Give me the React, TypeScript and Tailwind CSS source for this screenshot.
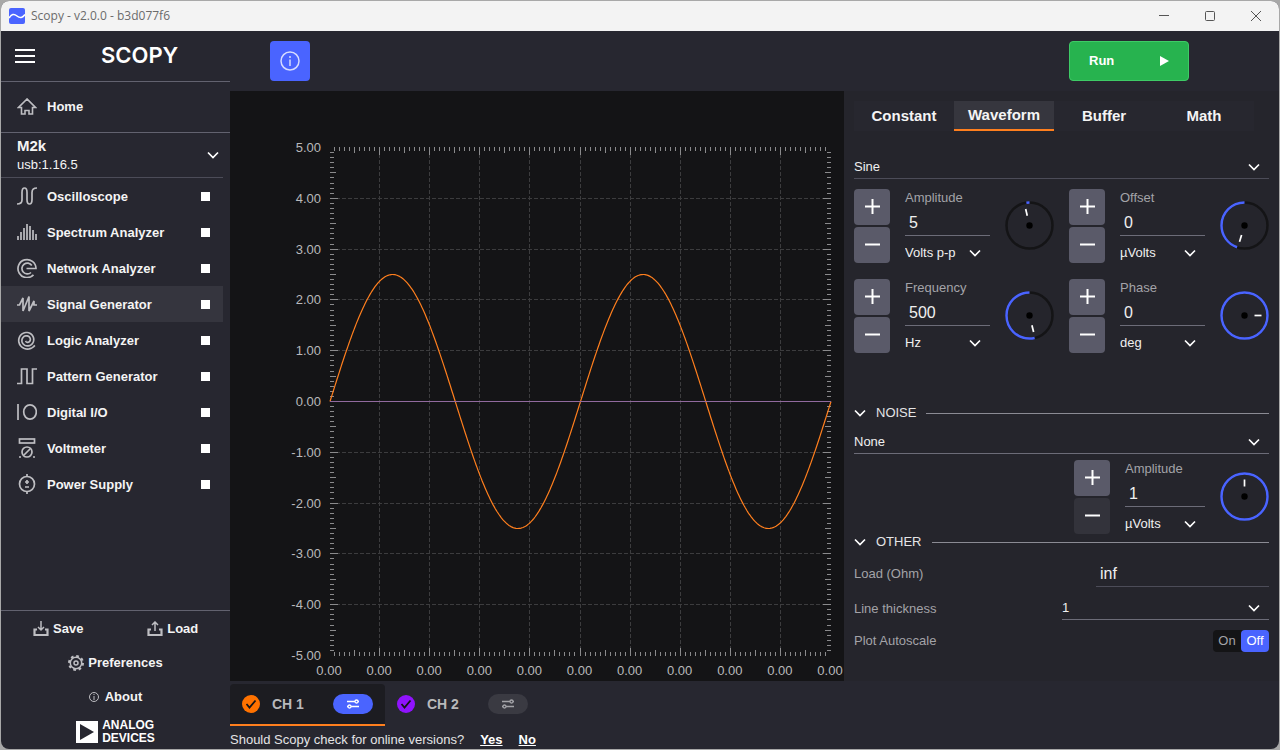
import { useState } from "react";
import type { ReactNode } from "react";
import clsx from "clsx";

type IconName =
  | "oscilloscope"
  | "spectrum"
  | "network"
  | "signal"
  | "logic"
  | "pattern"
  | "digital"
  | "voltmeter"
  | "power";

const TOOLS: { name: string; icon: IconName }[] = [
  { name: "Oscilloscope", icon: "oscilloscope" },
  { name: "Spectrum Analyzer", icon: "spectrum" },
  { name: "Network Analyzer", icon: "network" },
  { name: "Signal Generator", icon: "signal" },
  { name: "Logic Analyzer", icon: "logic" },
  { name: "Pattern Generator", icon: "pattern" },
  { name: "Digital I/O", icon: "digital" },
  { name: "Voltmeter", icon: "voltmeter" },
  { name: "Power Supply", icon: "power" },
];

const TABS = ["Constant", "Waveform", "Buffer", "Math"];

function spiralPath() {
  const points: string[] = [];
  for (let i = 0; i <= 80; i++) {
    const t = i / 80;
    const angle = 0.6 + (1 - t) * 2.3 * 2 * Math.PI;
    const r = 1.5 + 8 * Math.pow(t, 0.85);
    points.push(`${(10 + r * Math.cos(angle)).toFixed(2)} ${(10 + r * Math.sin(angle)).toFixed(2)}`);
  }
  return "M" + points.join("L");
}

const ICONS: Record<IconName, ReactNode> = {
  oscilloscope: (
    <path d="M0 18c3.500 0 5-1 5-4V6.500c0-3 .8-4.500 2.500-4.500S10 3.500 10 6.500v7c0 3 .8 4.500 2.500 4.500s2.500-1.500 2.500-4.500v-7c0-3 1.500-4.500 5-4.500" />
  ),
  spectrum: <path d="M1 18v-4M4 18v-8M7 18V6M10 18V2M13 18V4M16 18V8M19 18v-6" />,
  network: (
    <path d="M9.500 10.500h9.500A9 9 0 1 0 16.500 16.800M14.800 7.500A5.400 5.400 0 1 0 14 14.500" />
  ),
  signal: <path d="M0 11h2.500L6 4v13l6-14.500v14.500l5-10V11H20" />,
  logic: <path d={spiralPath()} />,
  pattern: <path d="M0 17.500h4.500V3h5.500v14.500h5.500V3H20" />,
  digital: (
    <>
      <path d="M1 2v16" />
      <ellipse cx="13" cy="10" rx="6.300" ry="7.200" />
    </>
  ),
  voltmeter: (
    <>
      <rect x="2.500" y="1" width="15" height="4" />
      <circle cx="10" cy="14" r="5" />
      <path d="M7 17l6-6M2 19h2M16 19h2" />
    </>
  ),
  power: (
    <>
      <circle cx="10" cy="10" r="7.500" />
      <path d="M10 0v3M10 17v3M8 8h4M10 6v4M8 13h4" />
    </>
  ),
};

function ToolIcon({ name }: { name: IconName }) {
  return (
    <svg viewBox="0 0 20 20" className="size-5 shrink-0" fill="none" stroke="#bebec2" strokeWidth="1.7" aria-hidden="true">
      {ICONS[name]}
    </svg>
  );
}

function Chevron({ className }: { className?: string }) {
  return (
    <svg viewBox="0 0 12 8" className={clsx("h-2 w-3 shrink-0", className)} fill="none" stroke="#fff" strokeWidth="1.7" aria-hidden="true">
      <path d="M1 1.500L6 6.500l5-5" />
    </svg>
  );
}

function TitleBar() {
  return (
    <header className="flex h-[30px] items-center bg-[#f3f3f3] pl-2">
      <svg viewBox="0 0 16 16" className="size-4" aria-hidden="true">
        <rect width="16" height="16" rx="2" fill="#4a64ff" />
        <path d="M0 10C2.500 6 5 5.500 8 8s5.500 2 8-1.500" fill="none" stroke="#fff" strokeWidth="1.500" />
      </svg>
      <h1 className="ml-1.5 flex-1 font-['Open_Sans',sans-serif] text-[12px] text-[#6b6b6b]">Scopy - v2.0.0 - b3d077f6</h1>
      <div className="flex gap-[6px] pr-[3px] text-[#555]">
        <button aria-label="Minimize" className="grid h-[30px] w-10 place-items-center">
          <svg viewBox="0 0 12 12" className="size-3" fill="none" stroke="currentColor"><path d="M1 5.500h10" /></svg>
        </button>
        <button aria-label="Maximize" className="grid h-[30px] w-10 place-items-center">
          <svg viewBox="0 0 12 12" className="size-3" fill="none" stroke="currentColor"><rect x="1.500" y="1.500" width="9" height="9" rx="1" /></svg>
        </button>
        <button aria-label="Close" className="grid h-[30px] w-10 place-items-center">
          <svg viewBox="0 0 12 12" className="size-3" fill="none" stroke="currentColor"><path d="M1 1l10 10M11 1L1 11" /></svg>
        </button>
      </div>
    </header>
  );
}

function Sidebar() {
  const [active, setActive] = useState("Signal Generator");

  return (
    <aside className="flex w-[229px] shrink-0 flex-col text-[13px] font-bold text-[#f4f4f4]">
      <div className="flex h-[51px] items-center border-b border-[#62626f] pb-px pl-3.5">
        <button aria-label="Menu">
          <svg viewBox="0 0 20 14" className="h-3.5 w-5" stroke="#fff" strokeWidth="2"><path d="M0 1h20M0 7h20M0 13h20" /></svg>
        </button>
        <div className="ml-[66px] font-['Inter',sans-serif] text-[22px] font-semibold text-white">SCOPY</div>
      </div>

      <a href="#home" className="flex h-[51px] items-center gap-2.5 border-b border-[#62626f] pl-4">
        <svg viewBox="0 0 20 20" className="size-5" fill="none" stroke="#bebec2" strokeWidth="1.600" aria-hidden="true">
          <path d="M10 2L1.500 10.500h3V17h3.500V13.500h4V17h3.500V10.500h3z" />
        </svg>
        Home
      </a>

      <div className="flex h-[45px] w-[222px] items-center justify-between border-b border-[#4c4c58] pr-1 pl-4">
        <div className="leading-[19px]">
          <div className="text-[15px]">M2k</div>
          <div className="font-normal">usb:1.16.5</div>
        </div>
        <Chevron />
      </div>

      <nav className="w-[222px]">
        {TOOLS.map((tool) => (
          <div key={tool.name} className={clsx("flex h-9 items-center pr-[13px] pl-4", active === tool.name && "bg-[#35353e]")}>
            <button onClick={() => setActive(tool.name)} className="flex flex-1 items-center gap-2.5 text-left">
              <ToolIcon name={tool.icon} />
              <span className="pt-0.5">{tool.name}</span>
            </button>
            <button aria-label={`Run ${tool.name}`} className="size-[9px] bg-white" />
          </div>
        ))}
      </nav>

      <div className="mt-auto border-t border-[#62626f] pt-px">
        <div className="grid h-[34px] grid-cols-2">
          <button className="flex items-center justify-center gap-1">
            <svg viewBox="0 0 16 16" className="size-4" fill="none" stroke="#bebec2" strokeWidth="1.500" aria-hidden="true">
              <path d="M4 8.500H1.500v5.500h13V8.500H12" strokeWidth="2.200" />
              <path d="M8 0v9M5 6l3 3 3-3" />
            </svg>
            Save
          </button>
          <button className="flex items-center justify-center gap-1">
            <svg viewBox="0 0 16 16" className="size-4" fill="none" stroke="#bebec2" strokeWidth="1.500" aria-hidden="true">
              <path d="M4 8.500H1.500v5.500h13V8.500H12" strokeWidth="2.200" />
              <path d="M8 10V1M5 4l3-3 3 3" />
            </svg>
            Load
          </button>
        </div>
        <button className="flex h-[34px] w-full items-center justify-center gap-1">
          <svg viewBox="0 0 16 16" className="size-4" fill="none" stroke="#bebec2" aria-hidden="true">
            <circle cx="8" cy="8" r="7" strokeWidth="2" strokeDasharray="2.750 2.750" />
            <circle cx="8" cy="8" r="5.700" strokeWidth="1.500" />
            <circle cx="8" cy="8" r="2" strokeWidth="1.500" />
          </svg>
          Preferences
        </button>
        <button className="flex h-[34px] w-full items-center justify-center gap-1.5">
          <svg viewBox="0 0 10 10" className="size-2.5" fill="none" stroke="#bebec2" aria-hidden="true">
            <circle cx="5" cy="5" r="4.500" />
            <path d="M5 2v1M5 4v4" />
          </svg>
          About
        </button>
        <div className="flex h-[35px] items-center justify-center gap-1">
          <svg viewBox="0 0 22 22" className="size-[22px]" aria-hidden="true">
            <path d="M0 0h22v22H0zM4 3v16l14-8z" fill="#fff" fillRule="evenodd" />
          </svg>
          <div className="text-[12px] leading-[13px] text-white">
            <div>ANALOG</div>
            <div>DEVICES</div>
          </div>
        </div>
      </div>
    </aside>
  );
}

// Plot geometry, in the svg's own units
const PLOT = { left: 100, right: 601, top: 57, bottom: 565 };
const DIVS = 10;
const STEP_X = (PLOT.right - PLOT.left) / DIVS;
const STEP_Y = (PLOT.bottom - PLOT.top) / DIVS;
const MID_Y = (PLOT.top + PLOT.bottom) / 2 - 0.5;

function sinePath(amplitude: number, periods: number) {
  const points: string[] = [];
  const width = PLOT.right - PLOT.left;
  for (let i = 0; i <= width; i++) {
    const y = MID_Y - amplitude * STEP_Y * Math.sin((i / width) * periods * 2 * Math.PI);
    points.push(`${PLOT.left + i},${y.toFixed(1)}`);
  }
  return "M" + points.join("L");
}

function tickPath() {
  let d = "";
  for (let i = 1; i < DIVS * 10; i++) {
    const size = i % 10 === 0 ? 8 : i % 5 === 0 ? 6 : 4;
    const x = Math.round(PLOT.left + (i * STEP_X) / 10) - 0.5;
    const y = Math.round(PLOT.top + (i * STEP_Y) / 10) - 0.5;
    d += `M${x} ${PLOT.top - 1}v${size}M${x} ${PLOT.bottom}v${-size}`;
    d += `M${PLOT.left} ${y}h${size}M${PLOT.right} ${y}h${-size}`;
  }
  return d;
}

function Plot() {
  const inner = Array.from({ length: DIVS - 1 }, (_, i) => i + 1);
  const all = Array.from({ length: DIVS + 1 }, (_, i) => i);

  return (
    <div className="min-w-0 flex-1 bg-[#141416]">
      <svg viewBox="0 0 614 590" className="block h-auto w-full font-['Liberation_Sans',sans-serif] text-[13px]" fill="none" role="img" aria-label="Signal preview">
        <g stroke="#3c3c3e" strokeDasharray="4 2">
          {inner.map((i) => (
            <path key={`v${i}`} d={`M${Math.round(PLOT.left + i * STEP_X) - 0.5} ${PLOT.top}V${PLOT.bottom}`} />
          ))}
          {inner.map((i) => (
            <path key={`h${i}`} d={`M${PLOT.left} ${Math.round(PLOT.top + i * STEP_Y) - 0.5}H${PLOT.right}`} />
          ))}
        </g>
        <path d={tickPath()} stroke="#8a8a8c" />
        <path d={sinePath(2.5, 2)} stroke="#ff7f1e" strokeWidth="1.200" />
        <path d={`M${PLOT.left} ${MID_Y}H${PLOT.right}`} stroke="#916a9e" />
        <g fill="#b9b9bb">
          {all.map((i) => (
            <text key={`y${i}`} x="91" y={PLOT.top + i * STEP_Y + 4} textAnchor="end">
              {(5 - i).toFixed(2)}
            </text>
          ))}
          {all.map((i) => (
            <text key={`x${i}`} x={PLOT.left + i * STEP_X - 1} y="584" textAnchor="middle">
              0.00
            </text>
          ))}
        </g>
      </svg>
    </div>
  );
}

interface SelectProps {
  label: string;
  options: string[];
  className?: string;
}

function Select({ label, options, className }: SelectProps) {
  return (
    <div className={clsx("grid items-center", className)}>
      <select aria-label={label} className="col-start-1 row-start-1 w-full appearance-none bg-transparent text-[13px] leading-5 text-[#f0f0f0] outline-none">
        {options.map((o) => (
          <option key={o}>{o}</option>
        ))}
      </select>
      <Chevron className="pointer-events-none col-start-1 row-start-1 mr-[9px] justify-self-end" />
    </div>
  );
}

interface DialProps {
  // clockwise angle of the needle, 0 is up
  needle: number;
  // how far the blue arc runs counter-clockwise from the top
  sweep: number;
}

function Dial({ needle, sweep }: DialProps) {
  const r = 23;
  const length = 2 * Math.PI * r;
  return (
    <svg viewBox="0 0 49 49" className="size-[49px] shrink-0" fill="none" aria-hidden="true">
      <circle cx="24.500" cy="24.500" r={r} stroke="#141416" strokeWidth="2.500" />
      <circle
        cx="24.500"
        cy="24.500"
        r={r}
        stroke="#4a64ff"
        strokeWidth="2.500"
        strokeDasharray={`${(length * sweep) / 360} ${length}`}
        transform="matrix(0 -1 -1 0 49 49)"
      />
      <circle cx="24.500" cy="24.500" r="3.200" fill="#000" />
      <path d="M24.500 7.500v7" stroke="#fff" strokeWidth="1.700" transform={`rotate(${needle} 24.500 24.500)`} />
    </svg>
  );
}

function StepButton({ label, kind, disabled }: { label: string; kind: "plus" | "minus"; disabled?: boolean }) {
  return (
    <button
      aria-label={label}
      disabled={disabled}
      className={clsx("grid size-9 place-items-center rounded", disabled ? "bg-[#33333b]" : "bg-[#5a5a69]")}
    >
      <svg viewBox="0 0 15 15" className="size-[15px]" stroke="#fff" strokeWidth="2" aria-hidden="true">
        <path d={kind === "plus" ? "M0 7.500h15M7.500 0v15" : "M0 7.500h15"} />
      </svg>
    </button>
  );
}

interface SpinProps extends DialProps {
  id: string;
  label: string;
  value: string;
  units: string[];
  minusDisabled?: boolean;
}

function Spin({ id, label, value, units, minusDisabled, needle, sweep }: SpinProps) {
  return (
    <div className="flex items-center gap-[15px]">
      <div className="flex flex-col gap-0.5">
        <StepButton kind="plus" label={`Increase ${id}`} />
        <StepButton kind="minus" label={`Decrease ${id}`} disabled={minusDisabled} />
      </div>
      <div className="flex min-w-0 flex-1 flex-col pt-0.5">
        <label htmlFor={id} className="text-[13px] leading-4 text-[#a3a3a8]">
          {label}
        </label>
        <input
          id={id}
          defaultValue={value}
          className="mb-[7px] h-[30px] w-full border-b border-[#6c6c78] bg-transparent pt-1 pl-1 text-[16px] text-[#f0f0f0] outline-none"
        />
        <Select label={`${label} unit`} options={units} />
      </div>
      <Dial needle={needle} sweep={sweep} />
    </div>
  );
}

function SectionHeader({ title }: { title: string }) {
  return (
    <div className="flex h-4 items-center">
      <button className="flex items-center gap-2.5 text-[13px] text-[#e4e4e6]">
        <Chevron />
        {title}
      </button>
      <div className="ml-2.5 h-px flex-1 bg-[#8b8b94]" />
    </div>
  );
}

function SettingsPanel() {
  const [tab, setTab] = useState("Waveform");
  const [autoscale, setAutoscale] = useState(false);

  return (
    <section className="w-[435px] shrink-0 bg-[#25252c] px-2.5 pt-2.5 text-[13px] text-[#a3a3a8]">
      <div role="tablist" className="mr-[15px] grid h-[30px] grid-cols-4 bg-[#27272f]">
        {TABS.map((t) => (
          <button
            key={t}
            role="tab"
            aria-selected={tab === t}
            onClick={() => setTab(t)}
            className={clsx("border-b-2 text-[15px] font-bold text-[#f4f4f4]", tab === t ? "border-[#ff7f1e] bg-[#36363e]" : "border-transparent pt-0.5")}
          >
            {t}
          </button>
        ))}
      </div>

      <Select label="Waveform type" options={["Sine", "Square", "Triangle"]} className="mt-[26px] border-b border-[#4c4c58] pb-px" />

      <div className="mt-[9px] grid grid-cols-2 gap-[15px]">
        <Spin id="amplitude" label="Amplitude" value="5" units={["Volts p-p"]} needle={-13} sweep={8} />
        <Spin id="offset" label="Offset" value="0" units={["µVolts"]} needle={197} sweep={160} />
        <Spin id="frequency" label="Frequency" value="500" units={["Hz"]} needle={166} sweep={192} />
        <Spin id="phase" label="Phase" value="0" units={["deg"]} needle={90} sweep={358} />
      </div>

      <div className="mt-[52px]">
        <SectionHeader title="NOISE" />
      </div>
      <Select label="Noise type" options={["None", "Uniform", "Gaussian"]} className="mt-[11px] border-b border-[#6c6c78] pb-px" />
      <div className="mt-[5px] ml-auto w-[195px]">
        <Spin id="noise-amplitude" label="Amplitude" value="1" units={["µVolts"]} minusDisabled needle={0} sweep={360} />
      </div>

      <SectionHeader title="OTHER" />
      <div className="mt-[9px] flex h-[30px] items-center justify-between">
        <label htmlFor="load">Load (Ohm)</label>
        <input
          id="load"
          defaultValue="inf"
          className="h-[25px] w-[173px] border-b border-[#4c4c58] bg-transparent pl-1 text-[16px] text-[#f0f0f0] outline-none"
        />
      </div>
      <div className="mt-[9px] flex items-center justify-between">
        <span>Line thickness</span>
        <Select label="Line thickness" options={["1", "2", "3"]} className="w-[207px] border-b border-[#6c6c78] pb-px" />
      </div>
      <div className="mt-2.5 flex items-center justify-between">
        <span id="autoscale">Plot Autoscale</span>
        <div role="group" aria-labelledby="autoscale" className="grid h-[22px] w-14 grid-cols-2 rounded bg-[#141416]">
          {[true, false].map((on) => (
            <button
              key={String(on)}
              aria-pressed={autoscale === on}
              onClick={() => setAutoscale(on)}
              className={clsx("rounded text-[13px]", autoscale === on && "bg-[#4a64ff] text-white")}
            >
              {on ? "On" : "Off"}
            </button>
          ))}
        </div>
      </div>
    </section>
  );
}

function Channel({ name, fill, selected }: { name: string; fill: string; selected?: boolean }) {
  return (
    <div className={clsx("flex w-[155px] items-center rounded-t border-b-2 pl-3", selected ? "border-[#ff7f1e] bg-[#1c1c21]" : "border-transparent")}>
      <label className="flex w-[91px] items-center gap-3 text-[14px] font-bold text-[#b9b9bb]">
        <span className="grid place-items-center">
          <input type="checkbox" defaultChecked className={clsx("col-start-1 row-start-1 size-[18px] appearance-none rounded-full", fill)} />
          <svg viewBox="0 0 12 10" className="pointer-events-none col-start-1 row-start-1 h-2.5 w-3" fill="none" stroke="#141416" strokeWidth="1.800" aria-hidden="true">
            <path d="M1.500 5l3 3.500 6-7" />
          </svg>
        </span>
        {name}
      </label>
      <button
        aria-label={`${name} settings`}
        className={clsx("grid h-5 w-10 place-items-center rounded-full", selected ? "bg-[#4a64ff] text-white" : "bg-[#3a3a42] text-[#a3a3a8]")}
      >
        <svg viewBox="0 0 14 12" className="h-3 w-3.5" fill="none" stroke="currentColor" strokeWidth="1.300" aria-hidden="true">
          <path d="M1 3.500h8M5 8.500h8M12 3.500h1M1 8.500h1" />
          <circle cx="10.500" cy="3.500" r="1.500" />
          <circle cx="3.500" cy="8.500" r="1.500" />
        </svg>
      </button>
    </div>
  );
}

export default function App() {
  return (
    <div className="flex min-h-screen flex-col bg-[#a8a8a8] p-px font-['Liberation_Sans',Arial,sans-serif]">
      <div className="flex flex-1 flex-col overflow-hidden rounded-lg bg-[#272730]">
        <TitleBar />
        <div className="flex flex-1">
          <Sidebar />
          <main className="flex min-w-0 flex-1 flex-col">
            <div className="flex h-[60px] items-center justify-between pr-[90px] pl-10">
              <button aria-label="Info" className="grid size-10 place-items-center rounded bg-[#4a64ff]">
                <svg viewBox="0 0 20 20" className="size-5" fill="none" stroke="#d5dbff" strokeWidth="1.500" aria-hidden="true">
                  <circle cx="10" cy="10" r="9" />
                  <path d="M10 5v2M10 8.500v6.500" />
                </svg>
              </button>
              <button className="flex h-10 w-[120px] items-center justify-between rounded border border-[#3ecb66] bg-[#27b34f] px-[19px] text-[13px] font-bold text-white">
                Run
                <svg viewBox="0 0 9 10" className="h-2.5 w-[9px]" fill="#fff" aria-hidden="true"><path d="M0 0l9 5-9 5z" /></svg>
              </button>
            </div>

            <div className="flex flex-1">
              <Plot />
              <SettingsPanel />
            </div>

            <div className="flex h-[45px] pt-[3px]">
              <Channel name="CH 1" fill="bg-[#ff7200]" selected />
              <Channel name="CH 2" fill="bg-[#9013fe]" />
            </div>
            <div className="flex h-[23px] items-center gap-4 pt-1 text-[13px] text-[#e4e4e6]">
              <span>Should Scopy check for online versions?</span>
              <a href="#yes" className="font-bold text-white underline">Yes</a>
              <a href="#no" className="font-bold text-white underline">No</a>
            </div>
          </main>
        </div>
      </div>
    </div>
  );
}
